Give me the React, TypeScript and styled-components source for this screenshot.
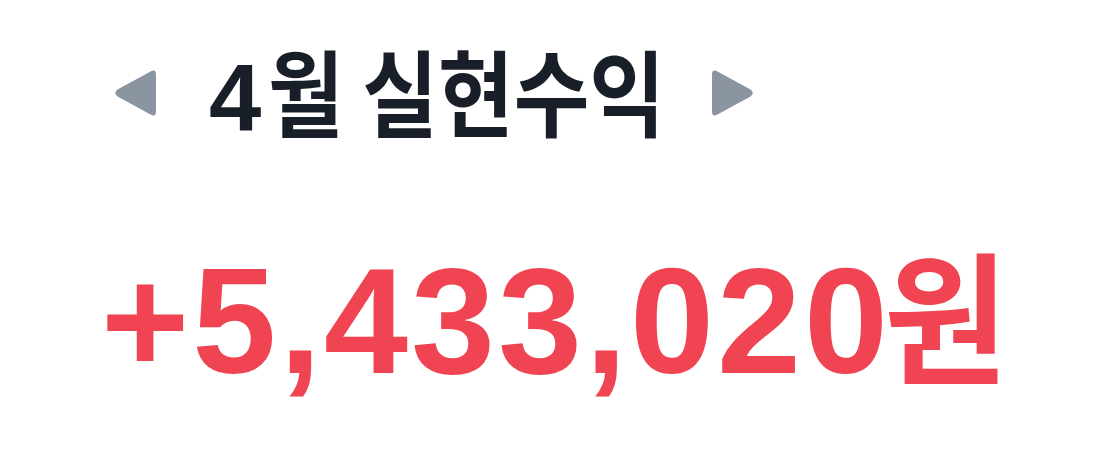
import React from 'react';
import styled, { createGlobalStyle } from 'styled-components';

const GlobalStyle = createGlobalStyle`
  html, body {
    margin: 0;
    padding: 0;
    background: #ffffff;
  }
  body {
    font-family: 'Liberation Sans', 'Noto Sans CJK KR', sans-serif;
  }
`;

const Page = styled.div`
  width: 1109px;
  height: 472px;
  box-sizing: border-box;
  padding: 43px 0 0 113px;
  display: flex;
  flex-direction: column;
`;

const MonthRow = styled.div`
  display: flex;
  align-items: center;
  height: 100px;
`;

const ArrowButton = styled.button<{ $side: 'left' | 'right' }>`
  background: none;
  border: none;
  padding: 0;
  width: 45px;
  height: 48px;
  display: flex;
  cursor: pointer;
  margin-right: ${p => (p.$side === 'left' ? '51px' : '0')};
  margin-left: ${p => (p.$side === 'right' ? '45px' : '0')};
`;

const MonthTitle = styled.h2`
  margin: 0;
  display: flex;
  align-items: baseline;
  font-family: 'Liberation Sans', sans-serif;
  font-size: 94px;
  font-weight: 700;
  color: #191f28;
  line-height: 1;
`;

// 한글은 좁은 자폭으로 보이도록 가로로 눌러준다
const Hangul = styled.span<{ $scale: number; $trim: number; $lead?: number }>`
  display: inline-block;
  font-family: 'Noto Sans CJK KR', sans-serif;
  font-weight: 700;
  white-space: pre;
  letter-spacing: 0;
  transform: scaleX(${p => p.$scale});
  transform-origin: left center;
  margin-left: ${p => p.$lead ?? 0}px;
  margin-right: -${p => p.$trim}px;
`;

const Amount = styled.div<{ $positive?: boolean }>`
  margin-top: 97px;
  margin-left: -12px;
  display: flex;
  align-items: baseline;
  font-family: 'Liberation Sans', sans-serif;
  font-size: 151px;
  font-weight: 700;
  line-height: 1;
  letter-spacing: 3px;
  color: ${p => (p.$positive ? '#f04452' : '#3182f6')};
`;

const WonSign = styled(Hangul)`
  font-size: 142px;
`;

const Triangle: React.FC<{ dir: 'left' | 'right' }> = ({ dir }) => (
  <svg width="45" height="48" viewBox="0 0 45 48">
    <path
      d={dir === 'left'
        ? 'M43 5.5 L43 42.5 Q43 48.5 37.5 45.5 L4.5 27.5 Q0 24 4.5 20.5 L37.5 2.5 Q43 -0.5 43 5.5 Z'
        : 'M2 5.5 L2 42.5 Q2 48.5 7.5 45.5 L40.5 27.5 Q45 24 40.5 20.5 L7.5 2.5 Q2 -0.5 2 5.5 Z'}
      fill="#8b95a1"
    />
  </svg>
);

const App: React.FC = () => {
  return (
    <>
      <GlobalStyle />
      <Page>
        <MonthRow>
          <ArrowButton $side="left" aria-label="이전 달">
            <Triangle dir="left" />
          </ArrowButton>
          <MonthTitle>
            4<Hangul $scale={0.875} $trim={57} $lead={7}>월 실현수익</Hangul>
          </MonthTitle>
          <ArrowButton $side="right" aria-label="다음 달">
            <Triangle dir="right" />
          </ArrowButton>
        </MonthRow>
        <Amount $positive>
          +5,433,020<WonSign $scale={0.95} $trim={7} $lead={-7}>원</WonSign>
        </Amount>
      </Page>
    </>
  );
};

export default App;
